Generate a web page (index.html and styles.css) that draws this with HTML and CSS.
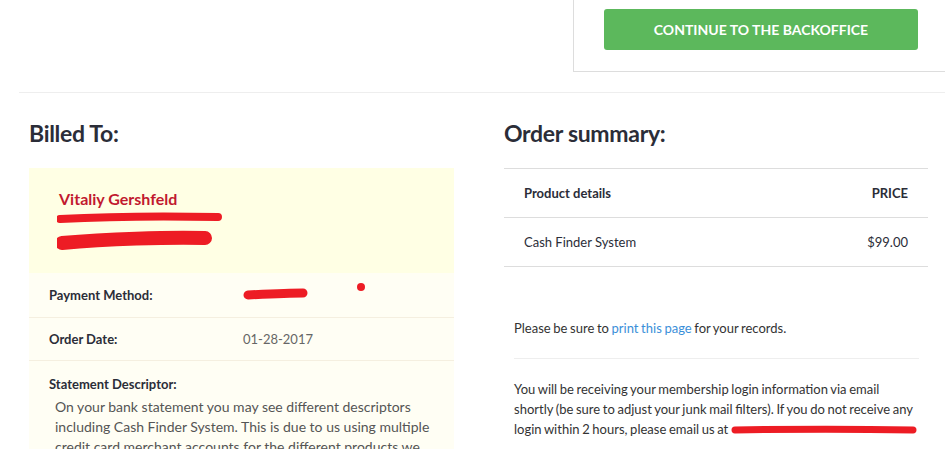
FILE: index.html
```html
<!DOCTYPE html>
<html lang="en">
<head>
  <meta charset="UTF-8">
  <meta name="viewport" content="width=device-width, initial-scale=1.0">
  <title>Order Receipt</title>
  <link rel="stylesheet" href="styles.css">
</head>
<body>
  <div class="topbar">
    <div class="cta-box">
      <a class="btn" href="#">Continue to the Backoffice</a>
    </div>
  </div>
  <hr class="divider">
  <div class="columns">
    <section class="billed">
      <h2>Billed To:</h2>
      <div class="bill-box">
        <div class="address">
          <div class="name">Vitaliy Gershfeld</div>
          <svg class="redact-address" width="170" height="48" viewBox="0 0 170 48">
            <path d="M3 11 C40 9 110 8 161 9" stroke="#ed1c24" stroke-width="8" stroke-linecap="round" fill="none"/>
            <path d="M5 35 C50 31 110 29 148 30" stroke="#ed1c24" stroke-width="14" stroke-linecap="round" fill="none"/>
          </svg>
        </div>
        <div class="row first">
          <span class="label">Payment Method:</span>
          <span class="value">
            <svg width="66" height="14" viewBox="0 0 66 14"><path d="M5 7 C25 6 45 5 60 5" stroke="#ed1c24" stroke-width="9" stroke-linecap="round" fill="none"/></svg>
          </span>
          <span class="dot"></span>
        </div>
        <div class="row">
          <span class="label">Order Date:</span>
          <span class="value">01-28-2017</span>
        </div>
        <div class="row descriptor">
          <span class="label">Statement Descriptor:</span>
          <p>On your bank statement you may see different descriptors including Cash Finder System. This is due to us using multiple credit card merchant accounts for the different products we offer.</p>
        </div>
      </div>
    </section>
    <section class="summary">
      <h2>Order summary:</h2>
      <table class="order-table">
        <tr>
          <th>Product details</th>
          <th class="price">PRICE</th>
        </tr>
        <tr>
          <td>Cash Finder System</td>
          <td class="price">$99.00</td>
        </tr>
      </table>
      <p class="note">Please be sure to <a href="#">print this page</a> for your records.</p>
      <p class="note">You will be receiving your membership login information via email shortly (be sure to adjust your junk mail filters). If you do not receive any login within 2 hours, please email us at <span class="email-redact"><svg width="186" height="10" viewBox="0 0 186 10"><path d="M4 5 C60 4 130 4 182 5" stroke="#ed1c24" stroke-width="7" stroke-linecap="round" fill="none"/></svg></span></p>
    </section>
  </div>
</body>
</html>
```

FILE: styles.css
```css
body {
  font-family: Lato, "Open Sans", sans-serif;
  color: #333;
  background-color: #fff;
  margin: 0;
  padding: 0;
}
.topbar {
  display: flex;
  justify-content: flex-end;
}
.cta-box {
  width: 314px;
  height: 62px;
  padding: 9px 27px 0 30px;
  border-left: 1px solid #ddd;
  border-bottom: 1px solid #ddd;
}
.btn {
  display: block;
  height: 41px;
  line-height: 41px;
  background-color: #5cb85c;
  border-radius: 3px;
  color: #fff;
  text-align: center;
  text-transform: uppercase;
  text-decoration: none;
  font-weight: 700;
  font-size: 14px;
}
.divider {
  margin: 20px 0 0 19px;
  border: none;
  border-top: 1px solid #eee;
  height: 0;
}
.columns {
  display: flex;
  gap: 50px;
  padding: 26px 0 0 29px;
}
.billed {
  width: 425px;
}
.summary {
  width: 424px;
}
h2 {
  margin: 0 0 20px;
  font-size: 23px;
  font-weight: 700;
  letter-spacing: -0.3px;
  line-height: 29px;
  color: #2b2d38;
}
.bill-box {
  background-color: #fffef4;
}
.address {
  background-color: #ffffe4;
  padding: 22px 30px 17px 28px;
}
.name {
  color: #c1192f;
  font-weight: 700;
  font-size: 16px;
  line-height: 18px;
  padding-left: 2px;
}
.redact-address {
  display: block;
}
.row {
  display: flex;
  align-items: center;
  padding: 13px 20px;
  border-bottom: 1px solid #f5efe0;
  font-size: 13px;
  line-height: 16px;
  position: relative;
}
.row.first {
  padding: 14px 20px;
}
.label {
  width: 194px;
  font-weight: 700;
  color: #2b2d38;
}
.value {
  color: #666;
}
.value svg {
  display: block;
}
.dot {
  position: absolute;
  left: 328px;
  top: 10px;
  width: 8px;
  height: 8px;
  border-radius: 50%;
  background-color: #ed1c24;
}
.descriptor {
  display: block;
  border-bottom: none;
  padding-top: 15px;
}
.descriptor p {
  margin: 5px 0 0 6px;
  font-size: 14px;
  line-height: 20px;
  color: #555;
}
.order-table {
  width: 100%;
  border-collapse: collapse;
  border-top: 1px solid #ddd;
  font-size: 13px;
  line-height: 16px;
}
.order-table th, .order-table td {
  padding: 16px 20px;
  border-bottom: 1px solid #ddd;
  text-align: left;
  color: #2b2d38;
}
.order-table th {
  font-weight: 700;
}
.order-table .price {
  text-align: right;
}
.note {
  margin: 0 9px 0 10px;
  padding: 20px 0;
  font-size: 13px;
  line-height: 20px;
  word-spacing: -0.7px;
  color: #333;
}
.note + .note {
  border-top: 1px solid #eee;
}
.order-table + .note {
  margin-top: 31px;
}
.note a {
  color: #3b8fd9;
  text-decoration: none;
}
.email-redact svg {
  vertical-align: -1px;
}
```
